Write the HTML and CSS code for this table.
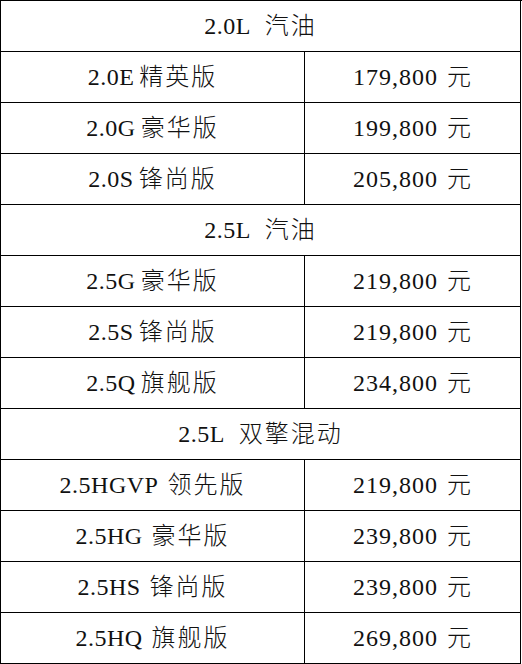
FILE: index.html
```html
<!DOCTYPE html>
<html lang="zh">
<head>
<meta charset="utf-8">
<link rel="stylesheet" href="styles.css">
</head>
<body>
<div class="price-table">
  <div class="cell head"><span class="code">2.0L</span> 汽油</div>
  <div class="cell model"><span class="code">2.0E</span>精英版</div><div class="cell price">179,800<span class="unit">元</span></div>
  <div class="cell model"><span class="code">2.0G</span>豪华版</div><div class="cell price">199,800<span class="unit">元</span></div>
  <div class="cell model"><span class="code">2.0S</span>锋尚版</div><div class="cell price">205,800<span class="unit">元</span></div>
  <div class="cell head"><span class="code">2.5L</span> 汽油</div>
  <div class="cell model"><span class="code">2.5G</span>豪华版</div><div class="cell price">219,800<span class="unit">元</span></div>
  <div class="cell model"><span class="code">2.5S</span>锋尚版</div><div class="cell price">219,800<span class="unit">元</span></div>
  <div class="cell model"><span class="code">2.5Q</span>旗舰版</div><div class="cell price">234,800<span class="unit">元</span></div>
  <div class="cell head"><span class="code">2.5L</span> 双擎混动</div>
  <div class="cell model"><span class="code">2.5HGVP</span> 领先版</div><div class="cell price">219,800<span class="unit">元</span></div>
  <div class="cell model"><span class="code">2.5HG</span> 豪华版</div><div class="cell price">239,800<span class="unit">元</span></div>
  <div class="cell model"><span class="code">2.5HS</span> 锋尚版</div><div class="cell price">239,800<span class="unit">元</span></div>
  <div class="cell model"><span class="code">2.5HQ</span> 旗舰版</div><div class="cell price">269,800<span class="unit">元</span></div>
</div>
</body>
</html>
```
FILE: styles.css
```css
html, body {
  margin: 0;
  padding: 0;
  background: #fff;
}
.price-table {
  display: grid;
  grid-template-columns: 304px 216px;
  grid-auto-rows: 51px;
  width: 521px;
  border-left: 1px solid #000;
  border-top: 1px solid #000;
  font-family: "Liberation Serif", "Noto Sans CJK SC", serif;
  font-size: 24px;
  font-weight: 300;
  line-height: 28px;
  color: #111;
}
.cell {
  display: flex;
  align-items: center;
  justify-content: center;
  border-right: 1px solid #000;
  border-bottom: 1px solid #000;
  letter-spacing: 2px;
  white-space: pre;
}
.head {
  grid-column: 1 / 3;
  word-spacing: 1px;
}
.model {
  word-spacing: -4px;
}
.code {
  letter-spacing: 0.5px;
  margin-right: 5px;
}
.price {
  letter-spacing: 1px;
}
.unit {
  margin-left: 9px;
}
```
